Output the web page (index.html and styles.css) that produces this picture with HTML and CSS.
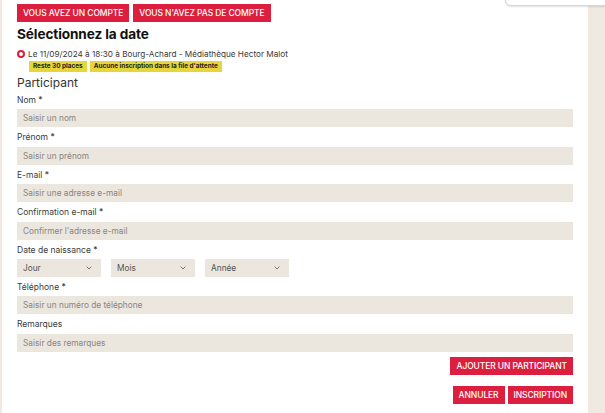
FILE: index.html
```html
<!DOCTYPE html>
<html lang="fr">

<head>
    <meta charset="UTF-8">
    <meta name="viewport" content="width=device-width, initial-scale=1.0">
    <title>Inscription</title>
    <link rel="stylesheet" href="styles.css">
</head>

<body>
    <div class="popup"></div>

    <div class="page">
        <div class="edge"></div>

        <main class="content">
            <div class="tabs">
                <button class="btn">VOUS AVEZ UN COMPTE</button>
                <button class="btn">VOUS N'AVEZ PAS DE COMPTE</button>
            </div>

            <h1 class="title">Sélectionnez la date</h1>

            <div class="session">
                <span class="radio"></span>
                <span>Le 11/09/2024 à 18:30 à Bourg-Achard - Médiathèque Hector Malot</span>
            </div>
            <div class="badges">
                <span class="badge">Reste 30 places</span>
                <span class="badge">Aucune inscription dans la file d'attente</span>
            </div>

            <h2 class="section">Participant</h2>

            <form class="form">
                <div class="field">
                    <label>Nom *</label>
                    <input type="text" placeholder="Saisir un nom">
                </div>
                <div class="field">
                    <label>Prénom *</label>
                    <input type="text" placeholder="Saisir un prénom">
                </div>
                <div class="field">
                    <label>E-mail *</label>
                    <input type="text" placeholder="Saisir une adresse e-mail">
                </div>
                <div class="field">
                    <label>Confirmation e-mail *</label>
                    <input type="text" placeholder="Confirmer l'adresse e-mail">
                </div>
                <div class="field">
                    <label>Date de naissance *</label>
                    <div class="selects">
                        <div class="select"><span>Jour</span>
                            <svg width="6" height="4" viewBox="0 0 6 4"><path d="M0.6 0.6 L3 3 L5.4 0.6" fill="none" stroke="#777" stroke-width="1"/></svg>
                        </div>
                        <div class="select"><span>Mois</span>
                            <svg width="6" height="4" viewBox="0 0 6 4"><path d="M0.6 0.6 L3 3 L5.4 0.6" fill="none" stroke="#777" stroke-width="1"/></svg>
                        </div>
                        <div class="select"><span>Année</span>
                            <svg width="6" height="4" viewBox="0 0 6 4"><path d="M0.6 0.6 L3 3 L5.4 0.6" fill="none" stroke="#777" stroke-width="1"/></svg>
                        </div>
                    </div>
                </div>
                <div class="field">
                    <label>Téléphone *</label>
                    <input type="text" placeholder="Saisir un numéro de téléphone">
                </div>
                <div class="field">
                    <label>Remarques</label>
                    <input type="text" placeholder="Saisir des remarques">
                </div>

                <div class="actions">
                    <button type="button" class="btn">AJOUTER UN PARTICIPANT</button>
                </div>
                <div class="actions actions-end">
                    <button type="button" class="btn">ANNULER</button>
                    <button type="button" class="btn">INSCRIPTION</button>
                </div>
            </form>
        </main>

        <aside class="sidebar"></aside>
    </div>
</body>

</html>
```

FILE: styles.css
```css
:root {
    --red: #dc1f3e;
    --beige: #ebe6de;
    --side: #efe9e1;
    --text: #3a3a3a;
}

* {
    box-sizing: border-box;
}

body {
    margin: 0;
    background: #ffffff;
    color: var(--text);
    font-family: Inter, "DejaVu Sans", sans-serif;
    height: 413px;
    overflow: hidden;
    position: relative;
}

.page {
    display: flex;
    height: 100%;
}

.edge {
    width: 2px;
    background: var(--side);
}

.content {
    flex: 1;
    padding: 4px 15px 0 15px;
}

.sidebar {
    width: 17px;
    background: var(--side);
}

/* bord inférieur d'un menu ouvert en haut à droite */
.popup {
    position: absolute;
    top: -10px;
    right: -10px;
    width: 110px;
    height: 16px;
    background: #fff;
    border: 1px solid #d6d6d6;
    border-radius: 6px;
    box-shadow: 0 1px 2px rgba(0, 0, 0, 0.12);
    z-index: 2;
}

.btn {
    background: var(--red);
    color: #fff;
    border: 0;
    font-family: inherit;
    font-size: 8.5px;
    font-weight: 500;
    letter-spacing: -0.1px;
    height: 18px;
    padding: 0 6px;
    cursor: pointer;
}

.tabs {
    display: flex;
    gap: 4px;
}

.title {
    font-size: 13.6px;
    font-weight: 700;
    color: #111;
    margin: 4px 0 0;
    line-height: 17px;
    letter-spacing: -0.1px;
}

.session {
    display: flex;
    align-items: center;
    gap: 3px;
    font-size: 8.2px;
    margin-top: 6px;
    line-height: 10px;
}

.radio {
    width: 8px;
    height: 8px;
    border: 2.5px solid var(--red);
    border-radius: 50%;
}

.badges {
    display: flex;
    gap: 3px;
    margin: 2px 0 0 12px;
}

.badge {
    background: #e7d63a;
    color: #222;
    font-size: 6.4px;
    font-weight: 700;
    line-height: 11px;
    padding: 0 4px;
}

.section {
    font-size: 12px;
    font-weight: 400;
    margin: 3px 0 0;
    line-height: 15px;
    color: #333;
}

.field label {
    display: block;
    font-size: 8.5px;
    line-height: 10px;
    padding: 5px 0 4.4px;
}

.field input {
    display: block;
    width: 100%;
    height: 18px;
    border: 0;
    background: var(--beige);
    font-family: inherit;
    font-size: 8.3px;
    padding: 0 6px;
    color: var(--text);
}

.field input::placeholder {
    color: #8a857e;
}

.selects {
    display: flex;
    gap: 10px;
}

.select {
    width: 84px;
    height: 18px;
    background: var(--beige);
    display: flex;
    align-items: center;
    justify-content: space-between;
    padding: 0 9px 0 6px;
    font-size: 8.3px;
    color: #555;
}

.actions {
    display: flex;
    justify-content: flex-end;
    margin-top: 5px;
}

.actions-end {
    gap: 3px;
    margin-top: 11px;
}
```
